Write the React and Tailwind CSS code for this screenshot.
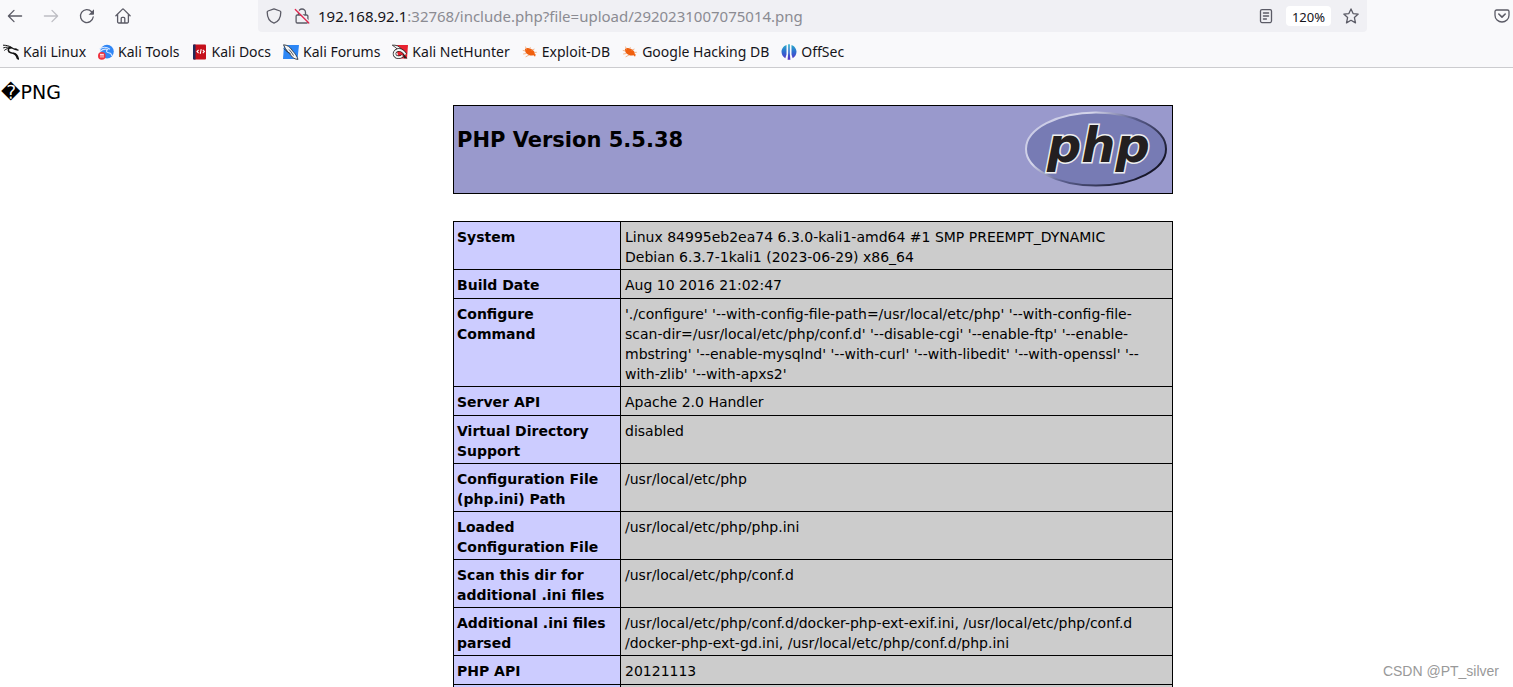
const stroke = { fill: 'none', stroke: 'currentColor', strokeWidth: 1.3, strokeLinecap: 'round', strokeLinejoin: 'round' };

function Icon({ children, className = '' }) {
  return (
    <svg aria-hidden="true" viewBox="0 0 16 16" className={`size-4 shrink-0 ${className}`}>
      {children}
    </svg>
  );
}

const BackIcon = () => (
  <Icon><path {...stroke} d="M14.6 8H1.6M7 2.4 1.4 8 7 13.6" /></Icon>
);
const ForwardIcon = () => (
  <Icon><path {...stroke} d="M1.4 8h13M9 2.4 14.6 8 9 13.6" /></Icon>
);
const ReloadIcon = () => (
  <Icon>
    <path {...stroke} d="M14.2 9A6.4 6.4 0 1 1 12.6 3.8" />
    <path fill="currentColor" d="M15 1.2v4.9a.7.7 0 0 1-.7.7H9.6z" />
  </Icon>
);
const HomeIcon = () => (
  <Icon>
    <path {...stroke} d="M.9 7.7 7.3 1.4a1 1 0 0 1 1.4 0l6.4 6.3M2.6 6.4v7.4a1.2 1.2 0 0 0 1.2 1.2h8.4a1.2 1.2 0 0 0 1.2-1.2V6.4M6.2 14.8v-4.4a1 1 0 0 1 1-1h1.6a1 1 0 0 1 1 1v4.4" />
  </Icon>
);
const ShieldIcon = () => (
  <Icon><path {...stroke} d="M8 .9 14 3c.5.2.8.6.8 1.1 0 4.6-1.9 9.5-6.8 11.1C3.1 13.6 1.2 8.7 1.2 4.1c0-.5.3-.9.8-1.1z" /></Icon>
);
const InsecureIcon = () => (
  <Icon>
    <path {...stroke} d="M4.5 7V4.5a3.5 3.5 0 0 1 7 0V7M3.3 7h9.4a1.2 1.2 0 0 1 1.2 1.2v5.6a1.2 1.2 0 0 1-1.2 1.2H3.3a1.2 1.2 0 0 1-1.2-1.2V8.2A1.2 1.2 0 0 1 3.3 7z" />
    <path d="M2.5 1 15.5 14" stroke="#f0f0f4" strokeWidth="1.3" />
    <path d="M1.3 1.5 14.8 15" stroke="#e22850" strokeWidth="1.3" strokeLinecap="round" />
  </Icon>
);
const ReaderIcon = () => (
  <Icon>
    <rect {...stroke} x="2.5" y="1.6" width="11" height="13" rx="1.5" />
    <path {...stroke} d="M5.4 5h5.2M5.4 8h5.2M5.4 11h3" />
  </Icon>
);
const StarIcon = () => (
  <Icon><path {...stroke} d="m8 .9 2.1 4.7 5.1.5-3.8 3.5 1.1 5.3L8 12.3l-4.5 2.6 1.1-5.3L.8 6.100l5.100-.5z" /></Icon>
);
const PocketIcon = () => (
  <Icon>
    <path {...stroke} d="M2.6 2h10.8A1.6 1.6 0 0 1 15 3.6v3.6a7 6.8 0 0 1-14 0V3.6A1.6 1.6 0 0 1 2.6 2z" />
    <path {...stroke} strokeWidth="1.6" d="m4.8 6 3.2 3.1L11.2 6" />
  </Icon>
);

const KaliLinuxIcon = () => (
  <Icon>
    <g fill="none" stroke="#111" strokeLinecap="round">
      <path strokeWidth="1" d="M.4 1.2C3 1.2 6 1.7 8.8 3.5M.6 3.8C3.4 2.9 6 3 8.8 3.7M1.6 6.2C3.5 4.7 5 4 8 4.2" />
      <path strokeWidth="1.6" d="M7 3.4C4.5 5 4.8 8.2 7.8 8.7c3.4.5 5.4 1.3 6.6 5.7" />
      <path strokeWidth="1.2" d="M8.5 3.7c1.2.6 2 1.4 3.6 1.8l3 .6M11 5c1.4-.4 2.4 0 3.5 1" />
      <path strokeWidth="1.4" d="M10.5 9.2c2.6.2 4 1.8 4.9 5.8" />
    </g>
  </Icon>
);
const KaliToolsIcon = () => (
  <Icon>
    <circle cx="9" cy="7.6" r="6.8" fill="#2f86f6" />
    <path d="M1.5 5C5 2.5 9 3 12 5.2M2 7.5C5 5 8 5 9.500 5.500c-1.800 1.500-1 3 1.200 3.300 1.800.2 2.800 1.200 3.300 3.200" fill="none" stroke="#d5e6ff" strokeWidth="1.1" />
    <circle cx="3.8" cy="11.9" r="3.8" fill="#ef3340" />
    <path d="M2 10.4h3.8M3 10.6v3M5 10.6v3" stroke="#fff" strokeWidth=".9" />
  </Icon>
);
const KaliDocsIcon = () => (
  <Icon>
    <rect x="1" y=".5" width="13" height="15" rx="1" fill="#c5101b" />
    <path d="M1 1.5a1 1 0 0 1 1-1h1.500v15H2a1 1 0 0 1-1-1z" fill="#1f2a5c" />
    <path d="M6.6 5.8 5 7.5l1.6 1.7M10.8 5.8l1.6 1.7-1.6 1.7M9.2 5.2 8.2 9.8" fill="none" stroke="#fff" strokeWidth="1.1" />
  </Icon>
);
const KaliForumsIcon = () => (
  <Icon>
    <path d="M1 1h15l-1.5 14H0z" fill="#2c86f5" />
    <path d="M.5.8c4 .2 6.5 2.2 8.5 5.2 1.5 2.4 4.2 4 6 9.4-3-.2-5.5-1.4-7-4C6 8.8 2.5 6 .5.8z" fill="#f4f4f4" stroke="#2b3440" strokeWidth=".9" />
    <path d="M.8 4.5C3 7 5 8.5 7.5 9.5M6 5.5c1.5 1.6 3 3.5 4.5 6" fill="none" stroke="#2b3440" strokeWidth=".9" />
  </Icon>
);
const NetHunterIcon = () => (
  <Icon>
    <path d="M3 1h13l-1 13.5H7z" fill="#e8222f" />
    <path d="M.3 1.2C4 .8 7 2 9 4.7L6.5 6.5C5 4.5 3 3 .3 1.2z" fill="#f4f4f4" stroke="#333" strokeWidth=".9" />
    <path d="M10.5 11.5C8.5 14 4.5 13.8 3 11.5S3.5 6.5 6 6s5 .6 7.5 4.500" fill="none" stroke="#222" strokeWidth="3.4" />
    <path d="M10.5 11.5C8.5 14 4.5 13.8 3 11.5S3.5 6.5 6 6s5 .6 7.5 4.500" fill="none" stroke="#f4f4f4" strokeWidth="2" />
    <path d="m11 9.5 4.5 5-3.5-.3z" fill="#222" />
  </Icon>
);
const BugIcon = () => (
  <Icon>
    <ellipse cx="7.8" cy="7.8" rx="5.4" ry="3.2" transform="rotate(28 7.8 7.8)" fill="#f0600f" />
    <path d="M9.5 9 13 12.8 13.8 10.5z" fill="#f0600f" />
    <path d="M4.5 5.5 3.5 2.6M7 5 8.5 3.2M9.5 6.2l3-1.2M4 7.2.8 6.4M4.6 9.5l-3.4.5M7 11l-3.4 1.9M12 8.5l2.8-.2" fill="none" stroke="#f0a270" strokeWidth=".8" />
  </Icon>
);
const OffSecIcon = () => (
  <Icon>
    <defs>
      <linearGradient id="offsec" x1="0" y1="0" x2="0" y2="16" gradientUnits="userSpaceOnUse">
        <stop offset="0" stopColor="#27b3c9" />
        <stop offset=".5" stopColor="#2f6bd0" />
        <stop offset="1" stopColor="#5a2bc4" />
      </linearGradient>
    </defs>
    <path fill="url(#offsec)" d="M5.500.9v9.500L4.300 14.300C1.500 12.500.5 10 .5 7.500S2.500 1.800 5.500.9zM10.500.9v9.500l1.200 3.900c2.800-1.800 3.800-4.300 3.800-6.800s-2-5.700-5-6.600zM7.200.3h1.600v8.800l.6 6.600H6.600l.6-6.600z" />
  </Icon>
);

const bookmarks = [
  ['Kali Linux', KaliLinuxIcon],
  ['Kali Tools', KaliToolsIcon],
  ['Kali Docs', KaliDocsIcon],
  ['Kali Forums', KaliForumsIcon],
  ['Kali NetHunter', NetHunterIcon],
  ['Exploit-DB', BugIcon],
  ['Google Hacking DB', BugIcon],
  ['OffSec', OffSecIcon],
];

const rows = [
  ['System', 'Linux 84995eb2ea74 6.3.0-kali1-amd64 #1 SMP PREEMPT_DYNAMIC Debian 6.3.7-1kali1 (2023-06-29) x86_64'],
  ['Build Date', 'Aug 10 2016 21:02:47'],
  ['Configure Command', "'./configure' '--with-config-file-path=/usr/local/etc/php' '--with-config-file-scan-dir=/usr/local/etc/php/conf.d' '--disable-cgi' '--enable-ftp' '--enable-mbstring' '--enable-mysqlnd' '--with-curl' '--with-libedit' '--with-openssl' '--with-zlib' '--with-apxs2'"],
  ['Server API', 'Apache 2.0 Handler'],
  ['Virtual Directory Support', 'disabled'],
  ['Configuration File (php.ini) Path', '/usr/local/etc/php'],
  ['Loaded Configuration File', '/usr/local/etc/php/php.ini'],
  ['Scan this dir for additional .ini files', '/usr/local/etc/php/conf.d'],
  ['Additional .ini files parsed', '/usr/local/etc/php/conf.d/docker-php-ext-exif.ini, /usr/local/etc/php/conf.d\u200b/docker-php-ext-gd.ini, /usr/local/etc/php/conf.d/php.ini'],
  ['PHP API', '20121113'],
  ['', ''],
];

function PhpLogo() {
  return (
    <svg role="img" aria-label="PHP logo" viewBox="0 0 144 80" className="h-20 w-36 shrink-0">
      <defs>
        <linearGradient id="rim" x1="0" y1="0" x2="1" y2=".6">
          <stop offset="0" stopColor="#c4c5e2" />
          <stop offset=".35" stopColor="#d4d5ea" />
          <stop offset=".6" stopColor="#5b5f8f" />
          <stop offset="1" stopColor="#17172a" />
        </linearGradient>
      </defs>
      <ellipse cx="71" cy="40" rx="70" ry="36.5" fill="#777bb4" stroke="url(#rim)" strokeWidth="2" />
      <text x="22" y="53" className="font-['DejaVu_Sans'] text-[48px] font-bold italic" fill="#231f20" stroke="#eeeeee" strokeWidth="3" paintOrder="stroke">php</text>
    </svg>
  );
}

function Toolbar() {
  return (
    <header className="shrink-0 border-b border-[#cccccf] bg-[#f9f9fb] font-['Noto_Sans',sans-serif] text-[#15141a]">
      <div className="flex h-8 items-center text-[#5b5b66]">
        <nav className="flex w-[258px] shrink-0 gap-5 pl-[7px]">
          <button aria-label="Back"><BackIcon /></button>
          <button aria-label="Forward" disabled className="text-[#bdbdc3]"><ForwardIcon /></button>
          <button aria-label="Reload"><ReloadIcon /></button>
          <button aria-label="Home"><HomeIcon /></button>
        </nav>
        <div className="flex h-8 flex-1 items-center rounded-b bg-[#f0f0f4] px-2">
          <button aria-label="Tracking protection"><ShieldIcon /></button>
          <button aria-label="Connection not secure" className="ml-3"><InsecureIcon /></button>
          <div className="ml-2 flex-1 text-[15px] text-[#8b8b92]">
            <span className="text-[#15141a]">192.168.92.1</span>:32768/include.php?file=upload/2920231007075014.png
          </div>
          <button aria-label="Reader view"><ReaderIcon /></button>
          <button className="ml-3 h-5 w-[45px] rounded-sm bg-white pt-px text-[13px]/5 text-[#15141a]">120%</button>
          <button aria-label="Bookmark this page" className="ml-3"><StarIcon /></button>
        </div>
        <div className="flex w-[146px] shrink-0 justify-end pr-[3px]">
          <button aria-label="Save to Pocket"><PocketIcon /></button>
        </div>
      </div>
      <nav className="flex h-[35px] items-center gap-3 pl-[3px] pt-1 text-[14px]">
        {bookmarks.map(([label, Glyph]) => (
          <a key={label} href="#" className="flex items-center gap-1 whitespace-nowrap">
            <Glyph />
            {label}
          </a>
        ))}
      </nav>
    </header>
  );
}

export default function App() {
  return (
    <div className="relative flex h-screen flex-col overflow-hidden bg-white">
      <Toolbar />
      <main className="flex-1 overflow-hidden pt-3 font-['DejaVu_Sans',sans-serif] text-sm/5 text-black">
        <p className="pl-px text-[19px]/6">�PNG</p>
        <div className="ml-[453px] mt-px w-[720px]">
          <div className="flex h-[89px] justify-between border border-black bg-[#9999cc] px-[3px] pt-[3px]">
            <h1 className="pt-[15px] text-[21px]/8 font-bold">PHP Version 5.5.38</h1>
            <a href="#"><PhpLogo /></a>
          </div>
          <table className="mt-[27px] w-full table-fixed border-collapse text-left">
            <colgroup>
              <col className="w-[167px]" />
              <col />
            </colgroup>
            <tbody>
              {rows.map(([name, value]) => (
                <tr key={name} className="h-[29px] align-top">
                  <th scope="row" className="border border-black bg-[#ccccff] pb-0.5 pl-[3px] pr-3 pt-[5px] font-bold">{name}</th>
                  <td className="border border-black bg-[#cccccc] pb-0.5 pl-1 pr-4 pt-[5px]">{value}</td>
                </tr>
              ))}
            </tbody>
          </table>
        </div>
      </main>
      <div className="absolute bottom-1.5 right-3.5 font-['Liberation_Sans',sans-serif] text-sm text-[#999999]">CSDN @PT_silver</div>
    </div>
  );
}
